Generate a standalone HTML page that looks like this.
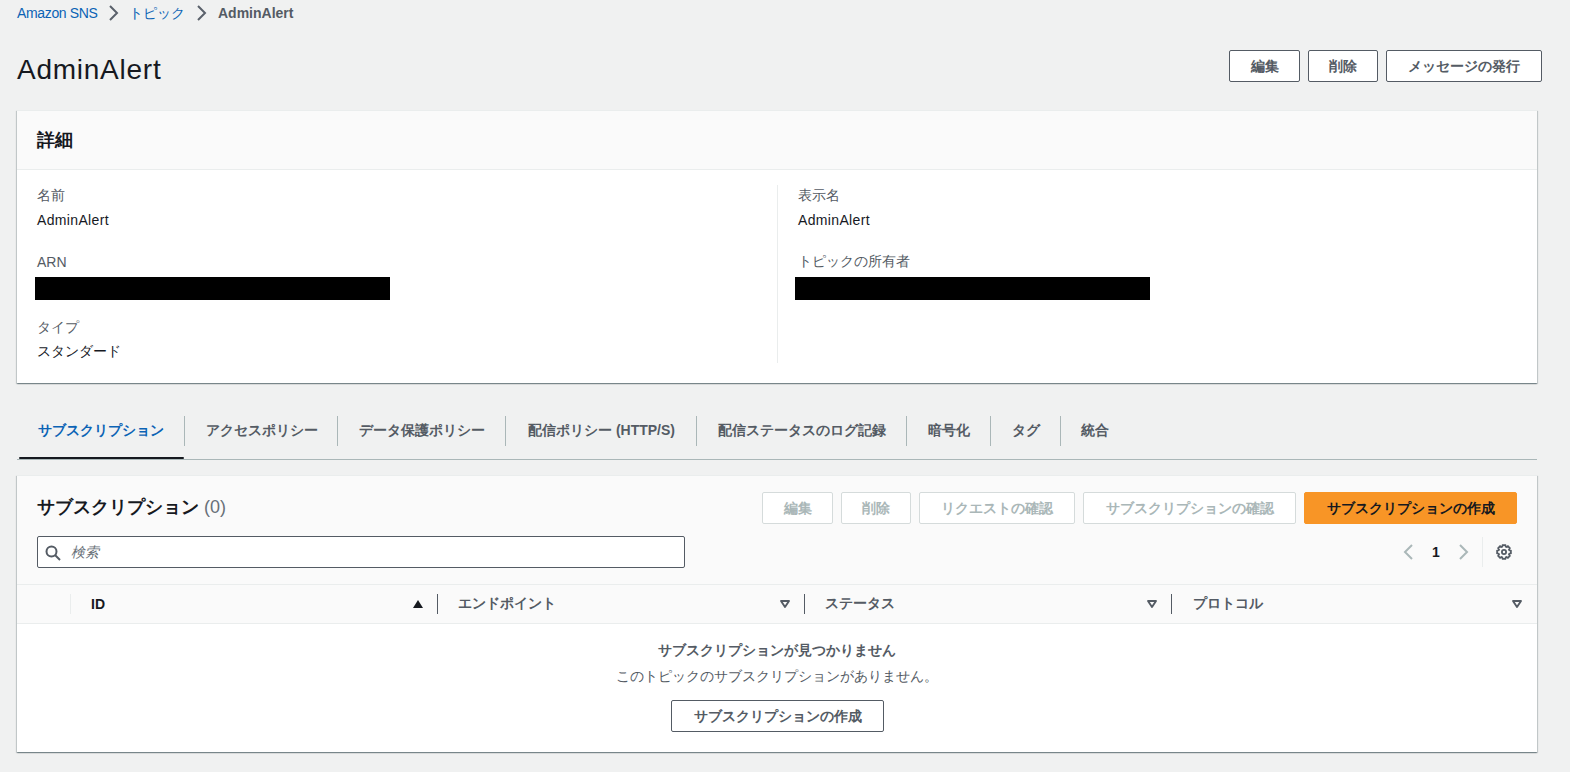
<!DOCTYPE html>
<html lang="ja">
<head>
<meta charset="utf-8">
<style>
*{box-sizing:border-box;margin:0;padding:0}
html,body{width:1570px;height:772px;overflow:hidden;background:#f0f1f1}
body{font-family:"Liberation Sans",sans-serif;font-size:14px;line-height:22px;color:#16191f;position:relative}
.a{position:absolute;white-space:nowrap}
.link{color:#0b63b5}
.chev{position:absolute}
.btn{position:absolute;height:32px;border:1px solid #545b64;border-radius:2px;background:#fff;color:#545b64;font-weight:bold;text-align:center;line-height:30px}
.btn.dis{border-color:#d5dbdb;color:#aab7b8}
.btn.pri{background:#f89526;border-color:#f89526;color:#16191f}
.cont{position:absolute;background:#fff;border-top:1px solid #eaeded;box-shadow:0 1px 1px 0 rgba(0,28,36,.3),1px 1px 1px 0 rgba(0,28,36,.15),-1px 1px 1px 0 rgba(0,28,36,.15)}
.lbl{color:#545b64}
.tab{position:absolute;top:419px;font-weight:bold;color:#545b64}
.tdiv{position:absolute;top:416px;width:1px;height:30px;background:#aab7b8}
.hdiv{position:absolute;top:594px;width:1px;height:20px;background:#545b64}
.th{position:absolute;top:592px;font-weight:bold;color:#545b64}
</style>
</head>
<body>
<!-- breadcrumb -->
<div class="a link" style="left:17px;top:2px;letter-spacing:-0.35px">Amazon SNS</div>
<svg class="chev" style="left:108px;top:5px" width="12" height="16" viewBox="0 0 12 16"><path d="M2 1 L9 8 L2 15" fill="none" stroke="#5a616b" stroke-width="2"/></svg>
<div class="a link" style="left:129px;top:2px">トピック</div>
<svg class="chev" style="left:196px;top:5px" width="12" height="16" viewBox="0 0 12 16"><path d="M2 1 L9 8 L2 15" fill="none" stroke="#5a616b" stroke-width="2"/></svg>
<div class="a" style="left:218px;top:2px;color:#545b64;font-weight:bold">AdminAlert</div>

<!-- title -->
<div class="a" style="left:17px;top:52px;font-size:28px;line-height:36px;letter-spacing:0.75px">AdminAlert</div>
<div class="btn" style="left:1229px;top:50px;width:71px">編集</div>
<div class="btn" style="left:1308px;top:50px;width:70px">削除</div>
<div class="btn" style="left:1386px;top:50px;width:156px">メッセージの発行</div>

<!-- details container -->
<div class="cont" style="left:17px;top:110px;width:1520px;height:273px">
  <div style="position:absolute;left:0;top:0;width:100%;height:59px;background:#fafafa;border-bottom:1px solid #eaeded"></div>
</div>
<div class="a" style="left:37px;top:128px;font-size:18px;line-height:24px;font-weight:bold">詳細</div>
<div style="position:absolute;left:777px;top:185px;width:1px;height:178px;background:#eaeded"></div>

<div class="a lbl" style="left:37px;top:184px">名前</div>
<div class="a" style="left:37px;top:209px;letter-spacing:0.35px">AdminAlert</div>
<div class="a lbl" style="left:37px;top:251px">ARN</div>
<div style="position:absolute;left:35px;top:277px;width:355px;height:23px;background:#000"></div>
<div class="a lbl" style="left:37px;top:316px">タイプ</div>
<div class="a" style="left:37px;top:340px">スタンダード</div>

<div class="a lbl" style="left:798px;top:184px">表示名</div>
<div class="a" style="left:798px;top:209px;letter-spacing:0.35px">AdminAlert</div>
<div class="a lbl" style="left:798px;top:250px">トピックの所有者</div>
<div style="position:absolute;left:795px;top:277px;width:355px;height:23px;background:#000"></div>

<!-- tabs -->
<div style="position:absolute;left:17px;top:459px;width:1520px;height:1px;background:#aab7b8"></div>
<div style="position:absolute;left:19px;top:457px;width:165px;height:2px;border-radius:1px;background:#16191f"></div>
<div class="tab" style="left:38px;color:#0b63b5">サブスクリプション</div>
<div class="tdiv" style="left:184px"></div>
<div class="tab" style="left:206px">アクセスポリシー</div>
<div class="tdiv" style="left:337px"></div>
<div class="tab" style="left:359px">データ保護ポリシー</div>
<div class="tdiv" style="left:505px"></div>
<div class="tab" style="left:528px">配信ポリシー (HTTP/S)</div>
<div class="tdiv" style="left:696px"></div>
<div class="tab" style="left:718px">配信ステータスのログ記録</div>
<div class="tdiv" style="left:906px"></div>
<div class="tab" style="left:928px">暗号化</div>
<div class="tdiv" style="left:990px"></div>
<div class="tab" style="left:1012px">タグ</div>
<div class="tdiv" style="left:1060px"></div>
<div class="tab" style="left:1081px">統合</div>

<!-- subscriptions container -->
<div class="cont" style="left:17px;top:475px;width:1520px;height:277px">
  <div style="position:absolute;left:0;top:0;width:100%;height:148px;background:#fafafa;border-bottom:1px solid #eaeded"></div>
  <div style="position:absolute;left:0;top:108px;width:100%;height:1px;background:#eaeded"></div>
</div>
<div class="a" style="left:37px;top:495px;font-size:18px;line-height:24px;font-weight:bold">サブスクリプション <span style="font-weight:normal;color:#687078">(0)</span></div>
<div class="btn dis" style="left:762px;top:492px;width:71px">編集</div>
<div class="btn dis" style="left:841px;top:492px;width:70px">削除</div>
<div class="btn dis" style="left:919px;top:492px;width:156px">リクエストの確認</div>
<div class="btn dis" style="left:1083px;top:492px;width:213px">サブスクリプションの確認</div>
<div class="btn pri" style="left:1304px;top:492px;width:213px">サブスクリプションの作成</div>

<!-- search -->
<div style="position:absolute;left:37px;top:536px;width:648px;height:32px;background:#fff;border:1px solid #545b64;border-radius:2px"></div>
<svg style="position:absolute;left:45px;top:545px" width="16" height="16" viewBox="0 0 16 16"><circle cx="6.5" cy="6.5" r="5" fill="none" stroke="#545b64" stroke-width="2"/><path d="M10 10 L15 15" stroke="#545b64" stroke-width="2"/></svg>
<div class="a" style="left:71px;top:541px;font-style:italic;color:#687078">検索</div>

<!-- pagination -->
<svg style="position:absolute;left:1402px;top:543px" width="14" height="18" viewBox="0 0 14 18"><path d="M10 2 L3 9 L10 16" fill="none" stroke="#aab7b8" stroke-width="2"/></svg>
<div class="a" style="left:1432px;top:541px;font-weight:bold">1</div>
<svg style="position:absolute;left:1457px;top:543px" width="14" height="18" viewBox="0 0 14 18"><path d="M3 2 L10 9 L3 16" fill="none" stroke="#aab7b8" stroke-width="2"/></svg>
<div style="position:absolute;left:1482px;top:537px;width:1px;height:30px;background:#eaeded"></div>
<svg style="position:absolute;left:1496px;top:544px" width="16" height="16" viewBox="0 0 16 16"><g fill="none" stroke="#545b64" stroke-width="1.8" stroke-linejoin="miter"><circle cx="8" cy="8" r="2.1"/><path d="M6.27 2.67 L6.66 1.13 L9.34 1.13 L9.73 2.67 L10.54 3.01 L11.91 2.20 L13.80 4.09 L12.99 5.46 L13.33 6.27 L14.87 6.66 L14.87 9.34 L13.33 9.73 L12.99 10.54 L13.80 11.91 L11.91 13.80 L10.54 12.99 L9.73 13.33 L9.34 14.87 L6.66 14.87 L6.27 13.33 L5.46 12.99 L4.09 13.80 L2.20 11.91 L3.01 10.54 L2.67 9.73 L1.13 9.34 L1.13 6.66 L2.67 6.27 L3.01 5.46 L2.20 4.09 L4.09 2.20 L5.46 3.01Z"/></g></svg>

<!-- table header -->
<div style="position:absolute;left:70px;top:594px;width:1px;height:20px;background:#eaeded"></div>
<div class="th" style="left:91px;top:593px;color:#16191f">ID</div>
<svg style="position:absolute;left:412px;top:599px" width="12" height="10" viewBox="0 0 12 10"><path d="M1 9 L6 1 L11 9Z" fill="#16191f"/></svg>
<div class="hdiv" style="left:437px"></div>
<div class="th" style="left:458px">エンドポイント</div>
<svg style="position:absolute;left:779px;top:599px" width="12" height="10" viewBox="0 0 12 10"><path d="M2 2 L10 2 L6 8Z" fill="none" stroke="#545b64" stroke-width="1.9" stroke-linejoin="round"/></svg>
<div class="hdiv" style="left:804px"></div>
<div class="th" style="left:825px">ステータス</div>
<svg style="position:absolute;left:1146px;top:599px" width="12" height="10" viewBox="0 0 12 10"><path d="M2 2 L10 2 L6 8Z" fill="none" stroke="#545b64" stroke-width="1.9" stroke-linejoin="round"/></svg>
<div class="hdiv" style="left:1171px"></div>
<div class="th" style="left:1193px">プロトコル</div>
<svg style="position:absolute;left:1511px;top:599px" width="12" height="10" viewBox="0 0 12 10"><path d="M2 2 L10 2 L6 8Z" fill="none" stroke="#545b64" stroke-width="1.9" stroke-linejoin="round"/></svg>

<!-- empty state -->
<div class="a" style="left:17px;width:1520px;top:639px;text-align:center;font-weight:bold;color:#545b64">サブスクリプションが見つかりません</div>
<div class="a" style="left:17px;width:1520px;top:665px;text-align:center;color:#545b64">このトピックのサブスクリプションがありません。</div>
<div class="btn" style="left:671px;top:700px;width:213px">サブスクリプションの作成</div>
</body>
</html>
